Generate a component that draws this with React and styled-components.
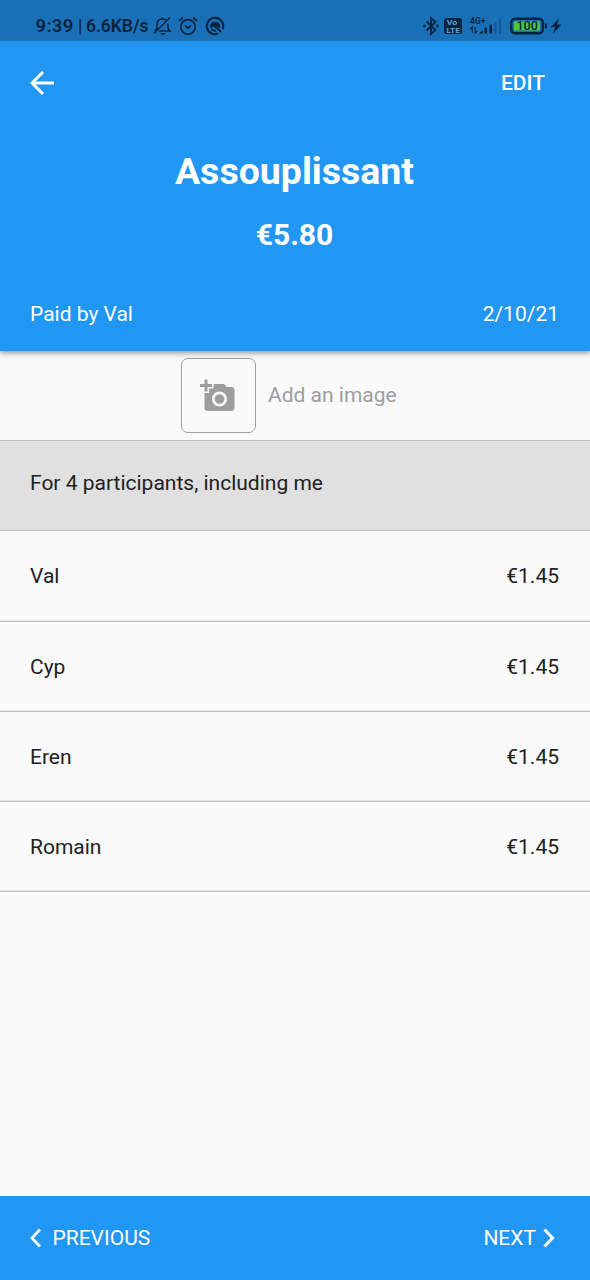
import React from "react";
import styled, { createGlobalStyle } from "styled-components";

const Global = createGlobalStyle`
  * { box-sizing: border-box; }
  body { margin: 0; background: #fafafa; font-family: Roboto, sans-serif; }
  svg { display: block; flex: none; }
`;

const Screen = styled.div`
  width: 590px;
  height: 1280px;
  display: flex;
  flex-direction: column;
  overflow: hidden;
  background: #fafafa;
  color: #212121;
  font-size: 21px;
  line-height: 30px;
`;

const StatusBar = styled.div`
  height: 41px;
  flex: none;
  display: flex;
  justify-content: space-between;
  padding: 11px 27px 0 35.5px;
  background: #1a70b7;
  color: #06243f;
`;

const StatusGroup = styled.div`
  display: flex;
  align-items: center;
  height: 30px;
`;

const StatusText = styled.span`
  width: ${(p) => p.$width};
  font-size: ${(p) => p.$size};
  font-weight: ${(p) => p.$weight || 600};
  white-space: nowrap;
  letter-spacing: ${(p) => p.$spacing || "0"};
`;

const StatusMarks = styled.div`
  display: flex;
  gap: 6.5px;
`;

const Header = styled.header`
  height: 310px;
  flex: none;
  position: relative;
  padding: 27px 31px 0 30px;
  background: #2196f3;
  color: #fff;
  box-shadow: 0 2px 6px rgba(0, 0, 0, 0.42);
  clip-path: inset(0 0 -12px 0);
`;

const Between = styled.div`
  display: flex;
  align-items: center;
  justify-content: space-between;
`;

const EditButton = styled.button`
  border: 0;
  padding: 0;
  margin-right: 14px;
  background: none;
  color: inherit;
  font: 500 21px/30px Roboto, sans-serif;
`;

const Title = styled.h1`
  margin: 51px 0 0;
  text-align: center;
  font-size: 37.5px;
  line-height: 44px;
  font-weight: 700;
`;

const Price = styled.p`
  margin: 24px 0 0;
  text-align: center;
  font-size: 30px;
  line-height: 36px;
  font-weight: 700;
`;

const Meta = styled(Between)`
  margin-top: 46px;
`;

const ImageRow = styled.div`
  height: 89px;
  flex: none;
  display: flex;
  align-items: center;
  gap: 12px;
  padding-left: 181px;
  color: #9e9e9e;
`;

const ImageButton = styled.div`
  width: 75px;
  height: 75px;
  display: flex;
  align-items: center;
  justify-content: center;
  padding-right: 1px;
  border: 1.5px solid #9e9e9e;
  border-radius: 7px;
`;

const ImageLabel = styled.span`
  padding-bottom: 2px;
`;

const Row = styled.div`
  height: 90.3px;
  flex: none;
  display: flex;
  align-items: center;
  justify-content: space-between;
  padding: 1px 31px 0 30px;
  border-bottom: 1px solid #bdbdbd;
  box-shadow: inset 0 -1px #e6e6e6;
`;

const Summary = styled(Row)`
  height: 91.3px;
  background: #e0e0e0;
  border-top: 1px solid #bdbdbd;
  box-shadow: none;
  padding: 0 30px 5px;
`;

const Footer = styled.footer`
  height: 84px;
  flex: none;
  margin-top: auto;
  display: flex;
  align-items: center;
  justify-content: space-between;
  padding: 0 35px 0 30px;
  background: #2196f3;
  color: #fff;
`;

const NavButton = styled.div`
  display: flex;
  align-items: center;
  gap: ${(p) => p.$gap};
`;

const people = ["Val", "Cyp", "Eren", "Romain"];

const MutedBell = () => (
  <svg width="19" height="20" viewBox="0 0 19 20" fill="none" stroke="currentColor" strokeWidth="1.5">
    <path d="M4 12V8.500C4 5 6.200 3 9.500 3c1.700 0 3 .5 4 1.500M15 7.500v5l2 2.500H6M9.500 3V1.500M8 17.800h4M17 1.500 1 17.500M4 12l-2 3" />
  </svg>
);

const Alarm = () => (
  <svg width="20" height="20" viewBox="0 0 20 20" fill="none" stroke="currentColor" strokeWidth="1.7">
    <circle cx="10" cy="11" r="7.3" />
    <path d="M1 5 5 1.500M19 5l-4-3.500M7 9.500l3 2.700 3-2.700" />
  </svg>
);

const Swirl = () => (
  <svg width="20" height="20" viewBox="0 0 20 20" fill="none" stroke="currentColor">
    <path d="M13 17.600A8.200 8.200 0 1 1 17.600 13" strokeWidth="2.100" />
    <path d="M5 10A5.200 5.200 0 0 1 15.200 10l-.2 2.500-4-2.500-2 .3L6 12.500Z" fill="currentColor" stroke="none" />
    <path d="m9.500 10 6.500 6M6.500 13A5 5 0 0 0 11 14.700" strokeWidth="1.8" />
  </svg>
);

const StatusIcons = () => (
  <svg width="140" height="24" viewBox="0 0 140 24" fill="currentColor" fontFamily="Roboto, sans-serif">
    <path d="m3.500 7.500 9 8.500-4.500 4V4l4.500 4-9 8.500" fill="none" stroke="currentColor" strokeWidth="1.8" />
    <circle cx="1.500" cy="12" r="1.400" />
    <circle cx="14.500" cy="12" r="1.400" />
    <rect x="21" y="4" width="18" height="16" rx="2.500" />
    <text x="23.700" y="11" fontSize="7.500" fontWeight="700" fill="#5aa2dc" textLength="10.500" lengthAdjust="spacingAndGlyphs">Vo</text>
    <text x="23.400" y="18.900" fontSize="7.500" fontWeight="700" fill="#5aa2dc" textLength="13.500" lengthAdjust="spacingAndGlyphs">LTE</text>
    <text x="47" y="9.500" fontSize="8.500" fontWeight="600" textLength="15.500">4G+</text>
    <path d="M49.300 19v-6l-2 2M52.200 13v6l2-2" fill="none" stroke="currentColor" strokeWidth="1.1" />
    <path d="M56 19.500 60 16v3.500zM61.500 13.500H64v6h-2.500zM66.500 10.500H69v9h-2.500z" />
    <path d="M71.500 8H73.500v11.500h-2zM76 5h2v14.500h-2z" opacity=".35" />
    <rect x="88.200" y="4.700" width="31.600" height="14.600" rx="4" fill="none" stroke="currentColor" strokeWidth="2.400" />
    <rect x="91" y="7.500" width="26" height="9" rx="1" fill="#4bc63c" />
    <path d="M121.800 9.500h1.200q1 0 1 1v3q0 1-1 1h-1.200z" />
    <text x="93.500" y="16.400" fontSize="12.500" fontWeight="500">100</text>
    <path d="m136 4-8.300 9.200h4.500L129.800 20l8.700-9.500H134z" />
  </svg>
);

export default function App() {
  return (
    <Screen>
      <Global />
      <StatusBar>
        <StatusGroup>
          <StatusText $width="42.500px" $size="18.500px" $spacing="0.350px">9:39</StatusText>
          <StatusText $width="8px" $size="17.500px" $weight={500}>|</StatusText>
          <StatusText $width="66.500px" $size="17.500px" $spacing="-0.050px">6.6KB/s</StatusText>
          <StatusMarks>
            <MutedBell />
            <Alarm />
            <Swirl />
          </StatusMarks>
        </StatusGroup>
        <StatusGroup><StatusIcons /></StatusGroup>
      </StatusBar>
      <Header>
        <Between>
          <svg width="24" height="24" viewBox="0 0 24 24" fill="none" stroke="currentColor" strokeWidth="3">
            <path d="M13 1 2 12l11 11M2 12h22" />
          </svg>
          <EditButton>EDIT</EditButton>
        </Between>
        <Title>Assouplissant</Title>
        <Price>€5.80</Price>
        <Meta><span>Paid by Val</span><span>2/10/21</span></Meta>
      </Header>
      <ImageRow>
        <ImageButton>
          <svg width="36" height="36" viewBox="0 0 24 24" fill="currentColor">
            <path d="M3 4V1h2v3h3v2H5v3H3V6H0V4h3zm3 6V7h3V4h7l1.830 2H21c1.100 0 2 .9 2 2v12c0 1.100-.9 2-2 2H5c-1.100 0-2-.9-2-2V10h3zm7 9c2.760 0 5-2.240 5-5s-2.240-5-5-5-5 2.240-5 5 2.240 5 5 5zm-3.200-5c0 1.770 1.430 3.200 3.200 3.200s3.200-1.430 3.200-3.200-1.430-3.200-3.200-3.200-3.200 1.430-3.200 3.200z" />
          </svg>
        </ImageButton>
        <ImageLabel>Add an image</ImageLabel>
      </ImageRow>
      <Summary>For 4 participants, including me</Summary>
      {people.map((name) => (
        <Row key={name}><span>{name}</span><span>€1.45</span></Row>
      ))}
      <Footer>
        <NavButton $gap="11.500px">
          <svg width="11" height="20" viewBox="0 0 11 20" fill="none" stroke="currentColor" strokeWidth="2.800">
            <path d="m10 1.500-8 8.500 8 8.500" />
          </svg>
          <span>PREVIOUS</span>
        </NavButton>
        <NavButton $gap="7px">
          <span>NEXT</span>
          <svg width="12" height="20" viewBox="0 0 12 20" fill="none" stroke="currentColor" strokeWidth="3">
            <path d="m1.500 1.500 8 8.500-8 8.500" />
          </svg>
        </NavButton>
      </Footer>
    </Screen>
  );
}
